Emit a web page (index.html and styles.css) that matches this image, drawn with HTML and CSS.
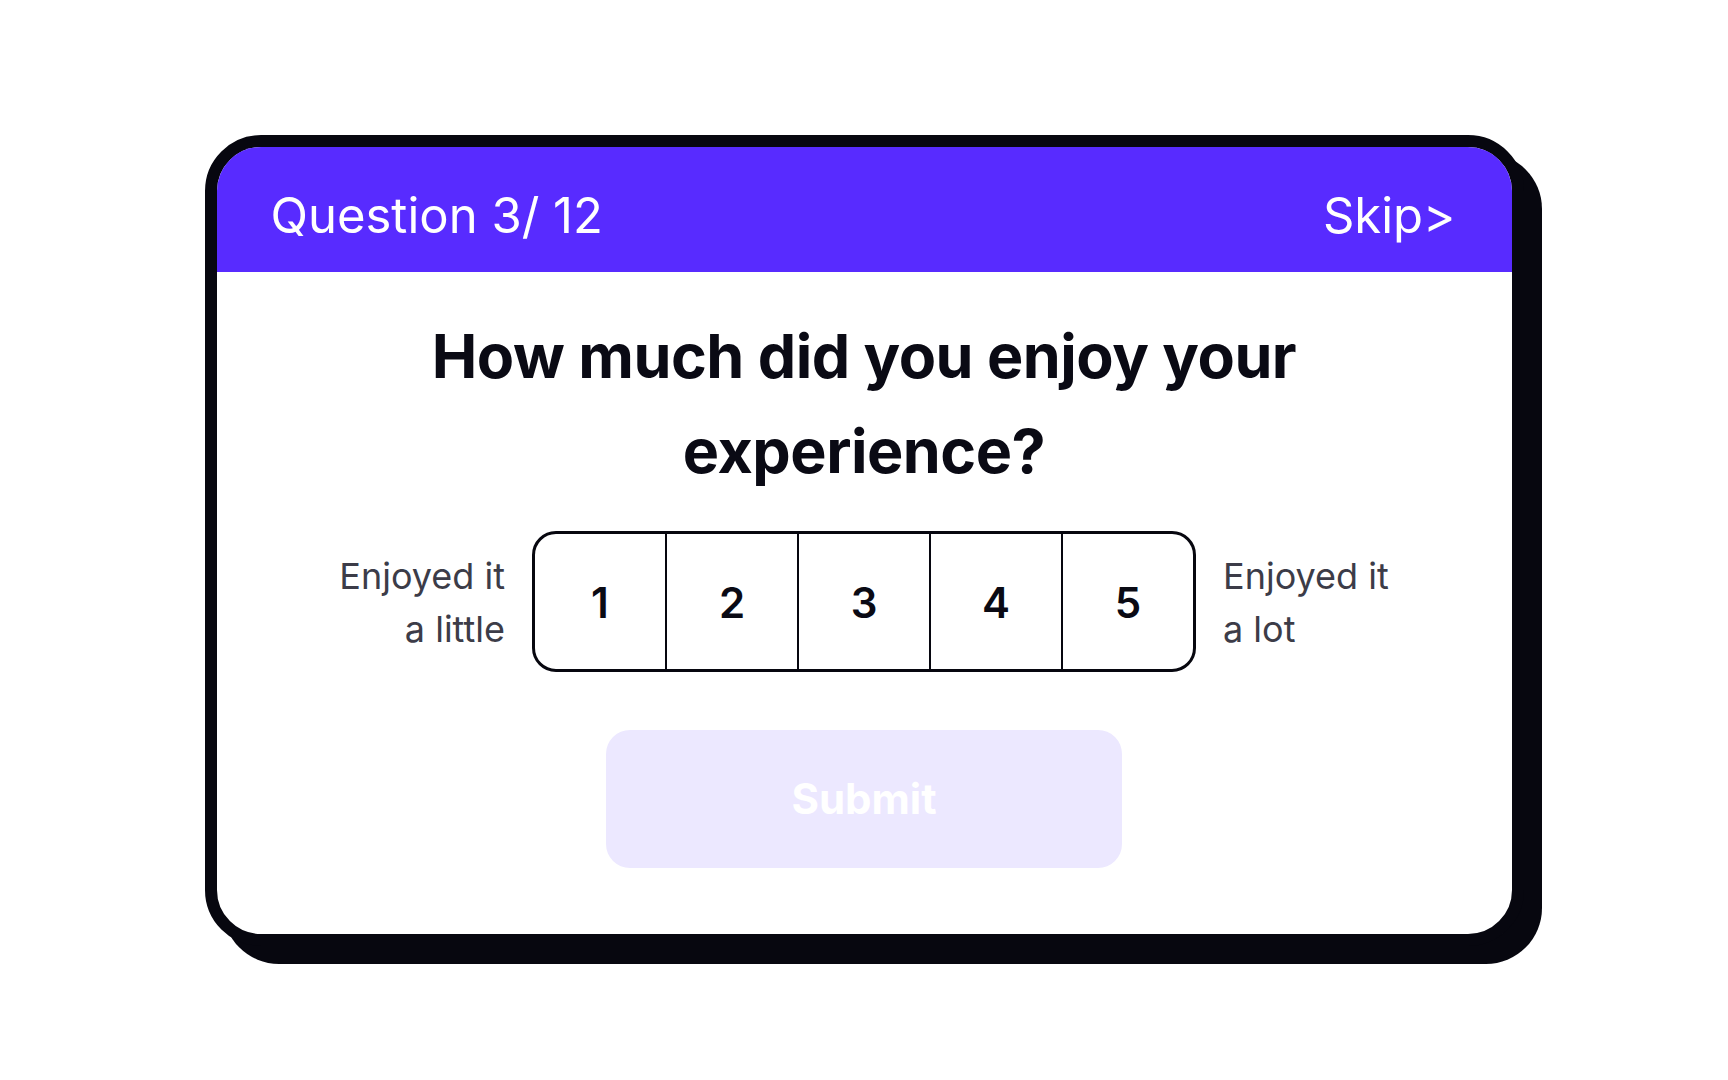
FILE: index.html
```html
<!DOCTYPE html>
<html lang="en">
<head>
<meta charset="utf-8">
<title>Question 3/ 12</title>
<link rel="stylesheet" href="styles.css">
</head>
<body>
  <main class="stage">
    <section class="card">
      <header class="card-head">
        <span class="progress">Question 3/ 12</span>
        <a class="skip" href="#">Skip&gt;</a>
      </header>
      <div class="card-body">
        <h1 class="question">How much did you enjoy your experience?</h1>
        <div class="rating-row">
          <p class="label label-left">Enjoyed it<br>a little</p>
          <div class="scale">
            <button class="cell">1</button>
            <button class="cell">2</button>
            <button class="cell">3</button>
            <button class="cell">4</button>
            <button class="cell">5</button>
          </div>
          <p class="label label-right">Enjoyed it<br>a lot</p>
        </div>
        <button class="submit" disabled>Submit</button>
      </div>
    </section>
  </main>
</body>
</html>
```

FILE: styles.css
```css
* { box-sizing: border-box; }

html, body {
  margin: 0;
  padding: 0;
  background: #ffffff;
}

body {
  font-family: Inter, "Noto Sans", "Liberation Sans", sans-serif;
}

.stage {
  width: 1728px;
  height: 1080px;
  display: flex;
  align-items: center;
  justify-content: center;
}

.card {
  width: 1319px;
  height: 811px;
  border: 12px solid #07070f;
  border-radius: 56px;
  background: #ffffff;
  box-shadow: 18px 18px 0 0 #07070f;
  overflow: hidden;
  display: flex;
  flex-direction: column;
}

.card-head {
  height: 125px;
  flex: none;
  background: #582bff;
  display: flex;
  align-items: center;
  justify-content: space-between;
  padding: 0 56px 0 54px;
  color: #ffffff;
  font-size: 49px;
  font-weight: 400;
}

.progress, .skip {
  line-height: 1;
  padding-top: 12px;
}

.skip {
  color: #ffffff;
  text-decoration: none;
}

.card-body {
  display: flex;
  flex-direction: column;
  align-items: center;
  padding-top: 37px;
}

.question {
  margin: 0;
  max-width: 920px;
  text-align: center;
  font-size: 61px;
  font-weight: 700;
  line-height: 95px;
  color: #0a0a14;
  letter-spacing: -0.5px;
}

.rating-row {
  margin-top: 32px;
  display: flex;
  align-items: center;
  gap: 27px;
}

.label {
  margin: 0;
  padding-top: 4px;
  font-size: 36px;
  line-height: 53px;
  color: #3c3c48;
  font-weight: 400;
}

.label-left { text-align: right; }
.label-right { text-align: left; }

.scale {
  width: 664px;
  height: 141px;
  border: 3px solid #07070f;
  border-radius: 24px;
  display: flex;
  overflow: hidden;
}

.cell {
  flex: 1;
  border: 0;
  border-left: 2.5px solid #07070f;
  background: transparent;
  font-family: inherit;
  font-size: 42px;
  font-weight: 600;
  color: #0a0a14;
  padding: 3px 0 0;
}

.cell:first-child { border-left: 0; }

.submit {
  margin-top: 58px;
  width: 516px;
  height: 138px;
  border: 0;
  border-radius: 24px;
  background: #ece8ff;
  color: #ffffff;
  font-family: inherit;
  font-size: 42px;
  font-weight: 700;
  padding-top: 0;
}
```
